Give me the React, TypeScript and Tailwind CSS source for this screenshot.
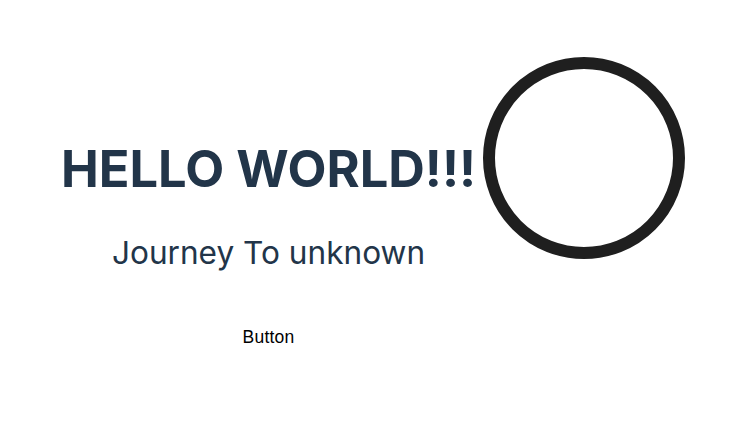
import React from "react";

export default function App() {
  return (
    <div className="w-[732px] h-[434px] bg-white font-['Inter',sans-serif]">
      <div className="flex flex-row items-start pt-[57px]">
        <div className="w-[483px] pl-[54px] flex flex-col items-center">
          <h1 className="mt-[87px] text-[50.6px] leading-none font-bold text-[#223549] whitespace-nowrap">
            HELLO WORLD!!!
          </h1>
          <p className="mt-[42px] text-[31.6px] leading-none text-[#223549] whitespace-nowrap">
            Journey To unknown
          </p>
          <button className="mt-[61px] text-[17.5px] leading-none text-black font-['Liberation_Sans',sans-serif] tracking-[0.2px]">
            Button
          </button>
        </div>
        <div className="w-[202px] h-[202px] rounded-full border-[12px] border-[#1f1f1f] shrink-0" />
      </div>
    </div>
  );
}
